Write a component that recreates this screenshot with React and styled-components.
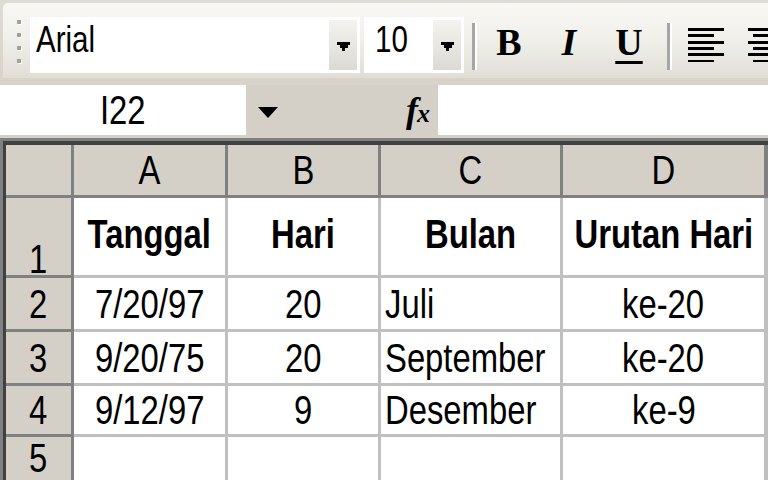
import React from 'react';
import styled, { createGlobalStyle } from 'styled-components';

const GlobalStyle = createGlobalStyle`
  html, body { margin: 0; padding: 0; background: #d4d0c8; overflow: hidden; }
  body {
    width: 768px; height: 480px;
    font-family: "Liberation Sans", Arial, sans-serif;
    color: #000;
  }
`;

const Window = styled.div`
  width: 768px; height: 480px; display: flex; flex-direction: column;
  overflow: hidden; background: #d4d0c8;
`;

const Dock = styled.div`
  flex: none; height: 85px; box-sizing: border-box; padding: 3px 0 0 3px;
  background: linear-gradient(#dfdcd5, #d7d3cb); overflow: hidden;
`;

const Toolbar = styled.div`
  width: 900px; height: 75px; box-sizing: border-box; padding-top: 14px;
  display: flex; align-items: flex-start;
  border-top-left-radius: 5px;
  background: linear-gradient(to bottom, #f9f8f5 0%, #f1f0eb 45%, #e1ded6 100%);
`;

const Gripper = styled.div`
  flex: none; width: 6px; margin: 3px 0 0 14px;
  display: flex; flex-direction: column; gap: 9px;
`;

const GripDot = styled.span`
  display: block; width: 4px; height: 4px; background: #a3a19b;
  box-shadow: 1px 1px 0 #fff;
`;

/* Condensed text, standing in for the hinted small Arial of the original */
const Txt = styled.span`
  display: inline-block;
  transform: scaleX(0.82);
  transform-origin: ${p => (p.$left ? 'left center' : 'center')};
`;

const Combo = styled.div`
  flex: none; width: ${p => p.$w}px; height: 56px; margin-left: ${p => p.$ml}px;
  box-sizing: border-box; padding: 3px; background: #fff;
  display: flex; align-items: stretch;
`;

const ComboText = styled.div`
  flex: 1; display: flex; align-items: center; overflow: hidden;
  padding: 0 0 10px ${p => p.$pl}px;
  font-size: 36px; line-height: 1;
`;

const ComboButton = styled.div`
  flex: none; width: 28px;
  background: linear-gradient(#f4f3ef, #dcdad3);
  display: flex; align-items: center; justify-content: center;
  padding-top: 3px; box-sizing: border-box;
`;

const Sep = styled.div`
  flex: none; width: 3px; height: 47px;
  margin: 6px ${p => p.$mr}px 0 8px;
  background: #a6a6a6; box-shadow: 2px 0 0 #fff;
`;

const ToolButton = styled.div`
  flex: none; width: 60px; height: 56px; box-sizing: border-box;
  display: flex; align-items: center; justify-content: center;
  padding-bottom: ${p => p.$pb ?? 6}px;
  font-family: "Liberation Serif", "Times New Roman", serif;
  font-size: 38px; line-height: 1; font-weight: bold;
  font-style: ${p => (p.$italic ? 'italic' : 'normal')};
`;

const Underlined = styled.span`
  text-decoration: underline;
  text-decoration-thickness: 3px;
  text-underline-offset: 6px;
`;

const FormulaRow = styled.div`
  flex: none; height: 50px; display: flex; background: #d4d0c8;
`;

const NameBox = styled.div`
  flex: none; width: 246px; background: #fff;
  display: flex; align-items: center; justify-content: center;
  font-size: 40px; line-height: 1;
`;

const NameArrow = styled.div`
  flex: none; width: 44px; display: flex; align-items: center; justify-content: center;
  padding-top: 5px; box-sizing: border-box;
`;

const FxBox = styled.div`
  flex: none; width: 148px; display: flex; align-items: center; justify-content: flex-end;
  padding-right: 8px; box-sizing: border-box;
  font-family: "Liberation Serif", "Times New Roman", serif;
  font-style: italic; font-weight: bold; line-height: 1;
`;

const FxF = styled.span` font-size: 36px; margin-right: -1px; `;
const FxX = styled.span` font-size: 26px; margin-top: 8px; `;

const FormulaInput = styled.div` flex: 1; background: #fff; `;

const Sheet = styled.div`
  flex: 1; min-height: 0; margin-top: 3px; display: flex;
  border-top: 3px solid #808080; border-left: 3px solid #808080;
`;

const SheetInner = styled.div`
  flex: 1; min-width: 0; overflow: hidden;
  border-top: 4px solid #404040; border-left: 3px solid #404040;
  display: grid; align-content: start;
  grid-template-columns: 68px 154px 153px 182px 204px 1fr;
  grid-template-rows: 53px 80px 54px 54px 51px 60px;
  background: #fff;
`;

const Cell = styled.div`
  box-sizing: border-box; min-width: 0; white-space: nowrap;
  overflow: ${p => (p.$head ? 'visible' : 'hidden')};
  border-right: 3px solid ${p => (p.$head ? '#808080' : '#c0c0c0')};
  border-bottom: 3px solid ${p => (p.$head ? '#808080' : '#c0c0c0')};
  background: ${p => (p.$head ? '#d4d0c8' : '#fff')};
  display: flex;
  align-items: ${p => p.$valign || 'center'};
  justify-content: ${p => (p.$align === 'left' ? 'flex-start' : 'center')};
  padding-left: ${p => (p.$align === 'left' ? 4 : 0)}px;
  padding-top: ${p => p.$pt ?? 0}px;
  padding-bottom: ${p => p.$pb ?? 0}px;
  font-size: 40px;
  line-height: ${p => p.$lh ?? 40}px;
  font-weight: ${p => (p.$bold ? 'bold' : 'normal')};
`;

const DropArrow = () => (
  <svg width="13" height="9" viewBox="0 0 13 9" shapeRendering="crispEdges">
    <polygon points="0,0 13,0 13,3 10.5,3 10.5,6 8,6 8,9 5,9 5,6 2.5,6 2.5,3 0,3" fill="#000" />
  </svg>
);

const BigArrow = () => (
  <svg width="20" height="11" viewBox="0 0 20 11">
    <polygon points="0,0 20,0 10,11" fill="#000" />
  </svg>
);

const AlignIcon = ({ center }) => {
  const lines = [0, 1, 2, 3, 4, 5];
  return (
    <svg width="36" height="34" viewBox="0 0 36 34" shapeRendering="crispEdges">
      {lines.map(i => {
        const long = i % 2 === 0;
        const w = long ? 36 : 26;
        const x = center && !long ? 5 : 0;
        return <rect key={i} x={x} y={i * 6.3} width={w} height="3" fill="#000" />;
      })}
    </svg>
  );
};

const columns = ['A', 'B', 'C', 'D', ''];

const rows = [
  {
    n: '1', head: { valign: 'flex-end', lh: 32 }, pb: 5,
    cells: [
      { t: 'Tanggal', b: true }, { t: 'Hari', b: true },
      { t: 'Bulan', b: true }, { t: 'Urutan Hari', b: true }, {},
    ],
  },
  { n: '2', cells: [{ t: '7/20/97' }, { t: '20' }, { t: 'Juli', a: 'left' }, { t: 'ke-20' }, {}] },
  { n: '3', cells: [{ t: '9/20/75' }, { t: '20' }, { t: 'September', a: 'left' }, { t: 'ke-20' }, {}] },
  { n: '4', cells: [{ t: '9/12/97' }, { t: '9' }, { t: 'Desember', a: 'left' }, { t: 'ke-9' }, {}] },
  { n: '5', head: { valign: 'flex-start', pt: 1 }, cells: [{}, {}, {}, {}, {}] },
];

export default function App() {
  return (
    <Window>
      <GlobalStyle />
      <Dock>
        <Toolbar>
          <Gripper>
            <GripDot /><GripDot /><GripDot /><GripDot />
          </Gripper>
          <Combo $w={330} $ml={7}>
            <ComboText $pl={3}><Txt $left>Arial</Txt></ComboText>
            <ComboButton><DropArrow /></ComboButton>
          </Combo>
          <Combo $w={100} $ml={4}>
            <ComboText $pl={8}><Txt $left>10</Txt></ComboText>
            <ComboButton><DropArrow /></ComboButton>
          </Combo>
          <Sep $mr={4} />
          <ToolButton>B</ToolButton>
          <ToolButton $italic>I</ToolButton>
          <ToolButton><Underlined>U</Underlined></ToolButton>
          <Sep $mr={6} />
          <ToolButton $pb={0}><AlignIcon /></ToolButton>
          <ToolButton $pb={0}><AlignIcon center /></ToolButton>
        </Toolbar>
      </Dock>
      <FormulaRow>
        <NameBox><Txt>I22</Txt></NameBox>
        <NameArrow><BigArrow /></NameArrow>
        <FxBox><FxF>f</FxF><FxX>x</FxX></FxBox>
        <FormulaInput />
      </FormulaRow>
      <Sheet>
        <SheetInner>
          <Cell $head />
          {columns.map((c, i) => (
            <Cell key={'h' + i} $head>{c && <Txt>{c}</Txt>}</Cell>
          ))}
          {rows.map(r => (
            <React.Fragment key={r.n}>
              <Cell
                $head
                $valign={r.head?.valign}
                $lh={r.head?.lh}
                $pt={r.head?.pt}
              >
                <Txt>{r.n}</Txt>
              </Cell>
              {r.cells.map((c, i) => (
                <Cell key={i} $bold={c.b} $align={c.a} $pb={r.pb}>
                  {c.t && <Txt $left={c.a === 'left'}>{c.t}</Txt>}
                </Cell>
              ))}
            </React.Fragment>
          ))}
        </SheetInner>
      </Sheet>
    </Window>
  );
}
